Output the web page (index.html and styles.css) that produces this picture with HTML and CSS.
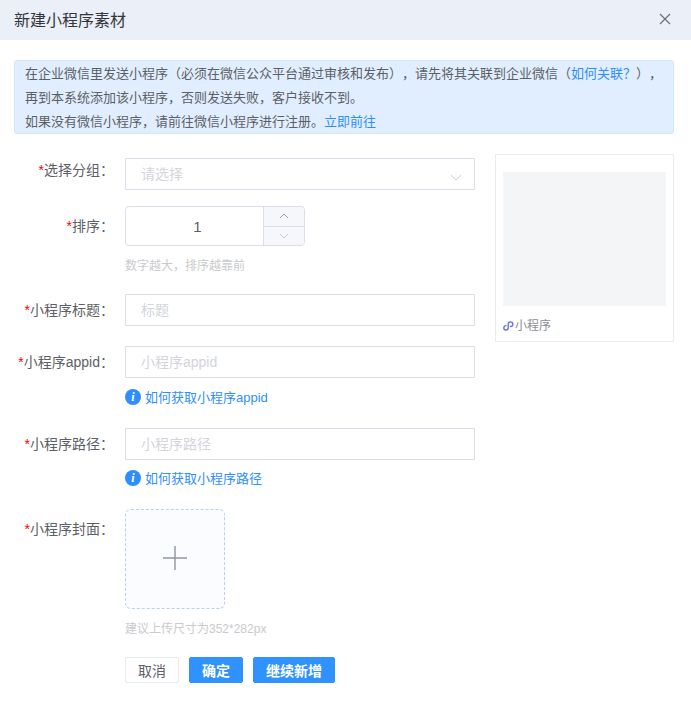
FILE: index.html
```html
<!DOCTYPE html>
<html lang="zh">
<head>
<meta charset="utf-8">
<title>新建小程序素材</title>
<link rel="stylesheet" href="styles.css">
</head>
<body>
<div class="dialog">
  <header class="head">
    <h1 class="title">新建小程序素材</h1>
    <svg class="close" width="12" height="12" viewBox="0 0 12 12"><path d="M1 1l10 10M11 1L1 11" stroke="#6b6f76" stroke-width="1.2" fill="none"/></svg>
  </header>
  <div class="alert">
    <p>在企业微信里发送小程序（必须在微信公众平台通过审核和发布），请先将其关联到企业微信（<a class="link">如何关联？</a>），</p>
    <p>再到本系统添加该小程序，否则发送失败，客户接收不到。</p>
    <p>如果没有微信小程序，请前往微信小程序进行注册。<a class="link">立即前往</a></p>
  </div>
  <div class="main">
    <form class="form">
      <div class="row row-select">
        <label class="label"><i>*</i>选择分组：</label>
        <div class="field">
          <div class="input select"><span class="ph">请选择</span>
            <svg width="12" height="7" viewBox="0 0 12 7"><path d="M1 1l5 5 5-5" stroke="#d3d4d8" fill="none"/></svg>
          </div>
        </div>
      </div>
      <div class="row row-num">
        <label class="label"><i>*</i>排序：</label>
        <div class="field">
          <div class="number">
            <span class="num-val">1</span>
            <div class="steppers">
              <span class="step"><svg width="10" height="6" viewBox="0 0 10 6"><path d="M1 5l4-4 4 4" stroke="#9a9ca3" fill="none"/></svg></span>
              <span class="step"><svg width="10" height="6" viewBox="0 0 10 6"><path d="M1 1l4 4 4-4" stroke="#c8cad0" fill="none"/></svg></span>
            </div>
          </div>
          <div class="hint hint-num">数字越大，排序越靠前</div>
        </div>
      </div>
      <div class="row row-title">
        <label class="label"><i>*</i>小程序标题：</label>
        <div class="field"><div class="input"><span class="ph">标题</span></div></div>
      </div>
      <div class="row row-appid">
        <label class="label"><i>*</i>小程序appid：</label>
        <div class="field">
          <div class="input"><span class="ph">小程序appid</span></div>
          <div class="help help-appid"><span class="info">i</span><a class="link">如何获取小程序appid</a></div>
        </div>
      </div>
      <div class="row row-path">
        <label class="label"><i>*</i>小程序路径：</label>
        <div class="field">
          <div class="input"><span class="ph">小程序路径</span></div>
          <div class="help"><span class="info">i</span><a class="link">如何获取小程序路径</a></div>
        </div>
      </div>
      <div class="row row-cover">
        <label class="label"><i>*</i>小程序封面：</label>
        <div class="field">
          <div class="upload">
            <svg class="plus" width="24" height="24" viewBox="0 0 24 24"><path d="M12 0v24M0 12h24" stroke="#8f96a3" stroke-width="1.4" fill="none"/></svg>
          </div>
          <div class="hint hint-cover">建议上传尺寸为352*282px</div>
          <div class="actions">
            <button type="button" class="btn btn-plain">取消</button>
            <button type="button" class="btn btn-primary">确定</button>
            <button type="button" class="btn btn-primary btn-wide">继续新增</button>
          </div>
        </div>
      </div>
    </form>
    <aside class="preview">
      <div class="thumb"></div>
      <div class="tag">
        <svg width="12" height="12" viewBox="0 0 12 12"><path d="M3 5.6A2.2 2.2 0 1 0 5.2 7.8V4.2A2.3 2.3 0 1 1 7.5 6.5" stroke="#6a6cf5" stroke-width="1.4" fill="none" stroke-linecap="round"/></svg>
        <span>小程序</span>
      </div>
    </aside>
  </div>
</div>
</body>
</html>
```
FILE: styles.css
```css
* { box-sizing: border-box; }
html, body { margin: 0; padding: 0; }
body {
  width: 691px;
  height: 709px;
  overflow: hidden;
  background: #fff;
  font-family: "Liberation Sans", "Noto Sans CJK SC", sans-serif;
  font-size: 13px;
  color: #606266;
  text-spacing-trim: space-all;
}
.head {
  height: 40px;
  background: #ebeff7;
  display: flex;
  align-items: center;
  justify-content: space-between;
  padding: 0 20px 3px 14px;
}
.title { margin: 0; font-size: 16px; font-weight: 400; color: #33363b; }
.alert {
  margin: 20px 17px 0 14px;
  height: 74px;
  padding: 1px 10px;
  background: #e1eeff;
  border: 1px solid #d4e6fd;
  border-radius: 3px;
  line-height: 24px;
  font-size: 13px;
  color: #5c5f66;
}
.alert p { margin: 0; white-space: nowrap; }
.link { color: #2f8eff; }
.main { display: flex; align-items: flex-start; padding-left: 14px; margin-top: 20px; }
.form { width: 461px; }
.row { display: flex; align-items: flex-start; margin-top: 20px; }
.row-select { margin-top: 4px; }
.row-num { margin-top: 16px; }
.row-title { margin-top: 19px; }
.row-appid { margin-top: 20px; }
.row-path { margin-top: 22px; }
.row-cover { margin-top: 22px; }
.label {
  width: 111px;
  flex: none;
  text-align: right;
  padding-right: 11px;
  line-height: 32px;
  font-size: 14px;
  white-space: nowrap;
  color: #5c5f66;
}
.row-select .label { line-height: 24px; }
.row-num .label { line-height: 40px; }
.row-cover .label { line-height: 40px; }
.label i { color: #ff0000; font-style: normal; }
.field { flex: 1; min-width: 0; }
.input {
  height: 32px;
  border: 1px solid #dcdde8;
  padding: 0 15px;
  display: flex;
  align-items: center;
  justify-content: space-between;
  font-size: 14px;
}
.ph { color: #d3d5da; line-height: 30px; }
.select svg { margin: 6px -3px 0 0; }
.number {
  width: 180px;
  height: 40px;
  border: 1px solid #dcdde8;
  border-radius: 4px;
  display: flex;
  overflow: hidden;
}
.num-val { flex: 1; text-align: center; padding-left: 6px; line-height: 40px; font-size: 15px; color: #5c5f66; }
.steppers { width: 41px; border-left: 1px solid #dcdde8; display: flex; flex-direction: column; background: #f5f7fa; }
.step { flex: 1; display: flex; align-items: center; justify-content: center; }
.step + .step { border-top: 1px solid #dcdde8; }
.hint { font-size: 12px; line-height: 18px; color: #c9cacd; }
.hint-num { margin-top: 11px; }
.hint-cover { margin-top: 11px; }
.help { display: flex; align-items: center; margin-top: 9px; height: 18px; font-size: 13px; }
.help-appid { margin-top: 10px; }
.help .link { margin-top: -1px; }
.info {
  width: 16px;
  height: 16px;
  border-radius: 50%;
  background: #2f8eff;
  color: #fff;
  font: italic bold 12px/16px "Liberation Serif", serif;
  text-align: center;
  margin-right: 4px;
}
.upload {
  width: 100px;
  height: 100px;
  border: 1px dashed #bdd0e6;
  border-radius: 6px;
  background: #fbfcff;
  display: flex;
  align-items: center;
  justify-content: center;
}
.plus { margin-bottom: 3px; }
.actions { display: flex; gap: 10px; margin-top: 19px; }
.btn {
  height: 26px;
  width: 54px;
  padding: 0;
  border-radius: 2px;
  font-family: inherit;
  font-size: 14px;
}
.btn-plain { background: #fff; border: 1px solid #e8e9ec; color: #5c5f66; }
.btn-primary { background: #2f92ff; border: 1px solid #2f92ff; color: #fff; font-weight: 700; }
.btn-wide { width: 82px; }
.preview {
  width: 179px;
  height: 188px;
  margin-left: 20px;
  border: 1px solid #eaebee;
  padding: 17px 7px 0;
}
.thumb { height: 134px; background: #f4f5f7; }
.tag { display: flex; align-items: center; margin-top: 11px; font-size: 12px; line-height: 18px; color: #8b8d92; }
```
